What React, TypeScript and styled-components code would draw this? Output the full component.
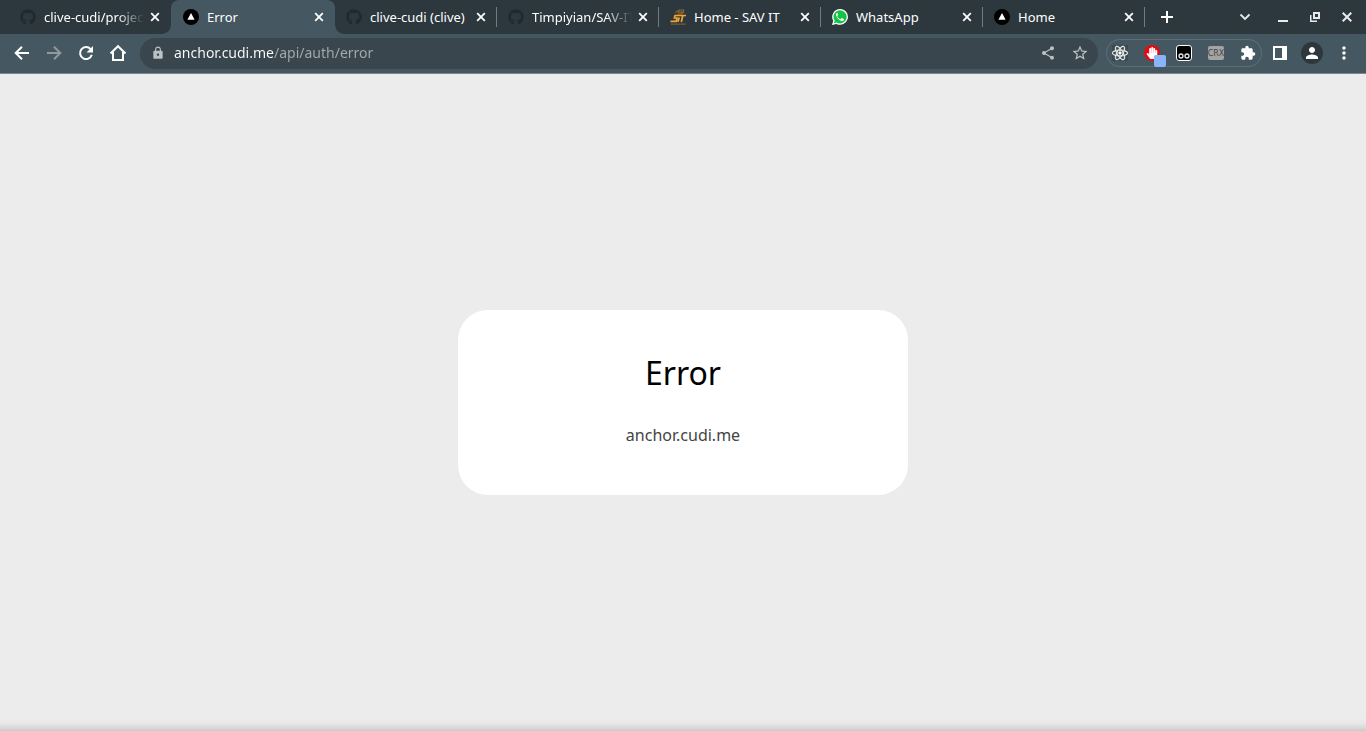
import React from "react";
import styled, { createGlobalStyle, css } from "styled-components";
import {
  MdLock,
  MdShare,
  MdStarBorder,
  MdExtension,
  MdPerson,
  MdMoreVert,
} from "react-icons/md";
import { FaGithub, FaReact, FaHandPaper } from "react-icons/fa";

const frame = "#2d383e";
const toolbar = "#455760";
const field = "#3a464d";

const GlobalStyle = createGlobalStyle`
  *, *::before, *::after { box-sizing: border-box; }
  body { margin: 0; font-family: "Noto Sans", sans-serif; background: #ececec; }
  button { padding: 0; border: 0; background: none; font: inherit; color: inherit; }
  svg { display: block; flex: none; }
`;

const Window = styled.div`
  display: flex;
  flex-direction: column;
  min-height: 100vh;
`;

const TabStrip = styled.header`
  display: flex;
  align-items: center;
  height: 34px;
  padding: 0 3px 0 9px;
  background: ${frame};
  color: #fff;
`;

const TabList = styled.nav`
  display: flex;
  flex: 0 1 auto;
  min-width: 0;
  height: 100%;
`;

const Tab = styled.div<{ $active?: boolean; $divided?: boolean }>`
  position: relative;
  display: flex;
  align-items: center;
  flex: 0 1 auto;
  width: ${(p) => (p.$active ? 164 : 162)}px;
  min-width: 0;
  height: 34px;
  padding: 0 8px 0 ${(p) => (p.$active ? 12 : 11)}px;

  ${(p) =>
    p.$divided &&
    css`
      &::after {
        content: "";
        position: absolute;
        right: 0;
        top: 7px;
        width: 1px;
        height: 20px;
        background: #707a7f;
      }
    `}

  ${(p) =>
    p.$active &&
    css`
      background: ${toolbar};
      border-radius: 8px 8px 0 0;

      &::before,
      &::after {
        content: "";
        position: absolute;
        bottom: 0;
        width: 8px;
        height: 8px;
      }
      &::before {
        right: 100%;
        background: radial-gradient(circle at 0 0, transparent 7px, ${toolbar} 8px);
      }
      &::after {
        left: 100%;
        background: radial-gradient(circle at 100% 0, transparent 7px, ${toolbar} 8px);
      }
    `}
`;

const TabLink = styled.a`
  display: flex;
  align-items: center;
  flex: 1;
  min-width: 0;
  gap: 8px;
  color: #fff;
  font-size: 13px;
  line-height: 18px;
  text-decoration: none;
`;

const TabTitle = styled.span<{ $fade?: boolean }>`
  flex: 1;
  min-width: 0;
  overflow: hidden;
  white-space: nowrap;
  ${(p) =>
    p.$fade &&
    css`
      mask-image: linear-gradient(to left, transparent 3px, #000 30px);
    `}
`;

const TabClose = styled.button`
  display: grid;
  place-items: center;
  flex: none;
  width: 16px;
  height: 16px;
`;

const FrameButton = styled.button`
  display: grid;
  place-items: center;
  flex: none;
  width: 32px;
  height: 32px;
  color: #e8eaeb;
`;

const NewTab = styled(FrameButton)`
  margin-left: 6px;
  color: #fff;
`;

const FrameControls = styled.div`
  display: flex;
  margin-left: auto;
  & > :first-child {
    margin-right: 6px;
  }
`;

const Toolbar = styled.div`
  display: flex;
  align-items: center;
  height: 40px;
  padding: 0 6px 1px;
  background: ${toolbar};
  border-bottom: 1px solid #7b878d;
  color: #fff;
`;

const ToolButton = styled.button<{ $dim?: boolean }>`
  display: grid;
  place-items: center;
  position: relative;
  flex: none;
  width: 32px;
  height: 28px;
  color: ${(p) => (p.$dim ? "#8f9a9f" : "#fff")};
`;

const AddressBar = styled.form`
  display: flex;
  align-items: center;
  flex: 1;
  min-width: 0;
  height: 31px;
  margin: 0 8px 0 6px;
  padding: 0 2px 0 11px;
  border-radius: 16px;
  background: ${field};
  color: #bcc1c4;
`;

const AddressInput = styled.input`
  flex: 1;
  min-width: 0;
  margin-left: 9px;
  padding: 0;
  border: 0;
  outline: 0;
  font: 14px/20px "Noto Sans", sans-serif;
  color: #fff;
  background: linear-gradient(to right, #fff 100px, #a4abae 100px);
  background-clip: text;
  -webkit-text-fill-color: transparent;
`;

const FieldButton = styled(ToolButton)`
  color: #bcc1c4;
`;

const Extensions = styled.div`
  display: flex;
  align-items: center;
  gap: 4px;
  height: 28px;
  margin-right: 2px;
  border-radius: 14px;
  box-shadow: inset 0 0 0 1px #5c6d76;
`;

const ExtensionButton = styled(ToolButton)`
  width: 28px;
`;

const ReactTile = styled.span`
  display: grid;
  place-items: center;
  width: 16px;
  height: 16px;
  background: #3c4b53;
`;

const Blocker = styled.span`
  display: grid;
  place-items: center;
  width: 16px;
  height: 16px;
  border-radius: 50%;
  background: #e50b12;
`;

const Badge = styled.span`
  position: absolute;
  right: 0;
  bottom: 0;
  width: 12px;
  height: 12px;
  border-radius: 2px;
  background: #8ab4f8;
`;

const Crx = styled.span`
  display: flex;
  justify-content: center;
  width: 16px;
  height: 14px;
  border-radius: 2px;
  background: #a3a3a3;
  color: #454545;
  font: 8px/16px "DejaVu Sans", sans-serif;
`;

const Avatar = styled.span`
  display: grid;
  place-items: center;
  width: 22px;
  height: 22px;
  border-radius: 50%;
  background: ${frame};
`;

const Page = styled.main`
  display: grid;
  place-items: center;
  flex: 1;
  padding: 20px;
  background: linear-gradient(to top, #cacaca, #dcdcdc 4px, #e8e8e8 8px, #ececec 13px);
`;

const Card = styled.section`
  display: flex;
  flex-direction: column;
  gap: 29px;
  width: 100%;
  max-width: 450px;
  padding: 41px 50px 49px;
  border-radius: 30px;
  background: #fff;
  text-align: center;
`;

const Heading = styled.h1`
  margin: 0;
  color: #000;
  font-size: 32px;
  font-weight: 400;
  line-height: 44px;
`;

const SiteLink = styled.a`
  color: #444;
  font-size: 16px;
  line-height: 22px;
  text-decoration: none;
`;

const CloseIcon = ({ size = 16 }: { size?: number }) => (
  <svg width={size} height={size} viewBox="0 0 16 16" aria-hidden="true">
    <path d="M4.2 4.2l7.6 7.6M11.8 4.2l-7.6 7.6" stroke="currentColor" strokeWidth="1.8" />
  </svg>
);

const VercelMark = () => (
  <svg width="16" height="16" viewBox="0 0 16 16" aria-hidden="true">
    <circle cx="8" cy="8" r="8" fill="#000" />
    <path d="M8 4l3.6 6.7H4.4z" fill="#fff" />
  </svg>
);

const WhatsAppMark = () => (
  <svg width="16" height="16" viewBox="0 0 16 16" aria-hidden="true">
    <path d="M8.1 0a7.9 7.9 0 1 1-3.7 14.9L0 16l1.2-4.2A7.9 7.9 0 0 1 8.1 0z" fill="#fff" />
    <path d="M8.1 1.3a6.6 6.6 0 1 1-3.5 12.2l-2.7.7.8-2.6A6.6 6.6 0 0 1 8.1 1.3z" fill="#12c344" />
    <path
      d="M5.9 4.3c-.2-.4-.5-.4-.8-.4-1 .6-1.3 1.5-1 2.5.8 2.5 2.6 4.6 5.2 5.5 1.3.4 2.6-.2 2.7-1.5 0-.3 0-.4-.3-.5l-1.7-.8c-.3-.1-.5 0-.6.2l-.6.8c-.2.2-.4.2-.7.1-1.3-.6-2.2-1.5-2.9-2.7-.1-.3 0-.4.2-.6.4-.5.6-.7.4-1.1z"
      fill="#fff"
    />
  </svg>
);

const SavMark = () => (
  <svg width="16" height="16" viewBox="0 0 16 16" aria-hidden="true" fill="none">
    <path d="M5.5 3.500L9.500 1h4v2.500L11 5H7.500M8 3.200h5" stroke="#8a6a35" strokeWidth="1.200" />
    <path
      d="M8 6.500H5L4.400 9H7L6.300 12.300H.5M9.200 8.500L8 12.800M8 6.500h8M12.800 6.500L11.300 13"
      stroke="#f2a52e"
      strokeWidth="1.700"
    />
    <path d="M1 15.200h14.500" stroke="#80663a" strokeWidth="1.200" strokeDasharray="2 .5" />
  </svg>
);

const ArrowIcon = ({ forward = false }: { forward?: boolean }) => (
  <svg width="16" height="16" viewBox="0 0 16 16" aria-hidden="true">
    <path
      d={forward ? "M1 8h13M8 1.700L14.300 8 8 14.300" : "M15 8H2M8 1.700L1.700 8 8 14.300"}
      fill="none"
      stroke="currentColor"
      strokeWidth="2"
    />
  </svg>
);

const ReloadIcon = () => (
  <svg width="16" height="16" viewBox="0 0 16 16" aria-hidden="true">
    <path
      d="M13.800 9.800A6 6 0 1 1 12.600 4.100"
      fill="none"
      stroke="currentColor"
      strokeWidth="2"
    />
    <path d="M15 1v6.500H8.500z" fill="currentColor" />
  </svg>
);

const HomeIcon = () => (
  <svg width="18" height="18" viewBox="0 0 18 18" aria-hidden="true">
    <path
      d="M1.500 9.500L9 2.200l7.500 7.300M4 8v8h10V8"
      fill="none"
      stroke="currentColor"
      strokeWidth="2"
    />
  </svg>
);

const RobotIcon = () => (
  <svg width="16" height="16" viewBox="0 0 16 16" aria-hidden="true">
    <rect x=".5" y=".5" width="15" height="15" rx="2.500" fill="#000" stroke="#fff" />
    <g fill="#000" stroke="#dfe6e9" strokeWidth="1.300">
      <circle cx="5" cy="11" r="2" />
      <circle cx="11" cy="11" r="2" />
    </g>
  </svg>
);

const SidePanelIcon = () => (
  <svg width="14" height="14" viewBox="0 0 14 14" aria-hidden="true">
    <path d="M0 0h14v14H0zM2 2v10h7V2z" fill="currentColor" fillRule="evenodd" />
  </svg>
);

const GithubMark = () => <FaGithub size={16} color="#22292e" />;

const tabs = [
  { title: "clive-cudi/project", icon: <GithubMark />, fade: true },
  { title: "Error", icon: <VercelMark />, active: true },
  { title: "clive-cudi (clive)", icon: <GithubMark />, divided: true },
  { title: "Timpiyian/SAV-IT", icon: <GithubMark />, fade: true, divided: true },
  { title: "Home - SAV IT", icon: <SavMark />, divided: true },
  { title: "WhatsApp", icon: <WhatsAppMark />, divided: true },
  { title: "Home", icon: <VercelMark />, divided: true },
];

export default function App() {
  return (
    <Window>
      <GlobalStyle />
      <TabStrip>
        <TabList aria-label="Tabs">
          {tabs.map((tab, i) => (
            <Tab key={i} $active={tab.active} $divided={tab.divided}>
              <TabLink href="#" aria-current={tab.active ? "page" : undefined}>
                {tab.icon}
                <TabTitle $fade={tab.fade}>{tab.title}</TabTitle>
              </TabLink>
              <TabClose aria-label={`Close ${tab.title}`}>
                <CloseIcon />
              </TabClose>
            </Tab>
          ))}
        </TabList>
        <NewTab aria-label="New tab">
          <svg width="12" height="12" viewBox="0 0 12 12">
            <path d="M6 0v12M0 6h12" stroke="currentColor" strokeWidth="2" />
          </svg>
        </NewTab>
        <FrameControls>
          <FrameButton aria-label="Search tabs">
            <svg width="12" height="12" viewBox="0 0 12 12">
              <path d="M1.500 3.500L6 8l4.500-4.500" fill="none" stroke="currentColor" strokeWidth="1.800" />
            </svg>
          </FrameButton>
          <FrameButton aria-label="Minimize">
            <svg width="10" height="10" viewBox="0 0 10 10">
              <path d="M0 9h10" stroke="currentColor" strokeWidth="2" />
            </svg>
          </FrameButton>
          <FrameButton aria-label="Restore">
            <svg width="10" height="10" viewBox="0 0 10 10" fill="none" stroke="currentColor">
              <path d="M4 1h5v5H4z" strokeWidth="2" />
              <path d="M.75 3v6.250H7" strokeWidth="1.500" />
            </svg>
          </FrameButton>
          <FrameButton aria-label="Close window">
            <CloseIcon size={18} />
          </FrameButton>
        </FrameControls>
      </TabStrip>

      <Toolbar>
        <ToolButton aria-label="Back">
          <ArrowIcon />
        </ToolButton>
        <ToolButton aria-label="Forward" $dim>
          <ArrowIcon forward />
        </ToolButton>
        <ToolButton aria-label="Reload">
          <ReloadIcon />
        </ToolButton>
        <ToolButton aria-label="Home">
          <HomeIcon />
        </ToolButton>
        <AddressBar onSubmit={(e) => e.preventDefault()}>
          <MdLock size={14} />
          <AddressInput aria-label="Address" defaultValue="anchor.cudi.me/api/auth/error" />
          <FieldButton type="button" aria-label="Share">
            <MdShare size={16} />
          </FieldButton>
          <FieldButton type="button" aria-label="Bookmark">
            <MdStarBorder size={18} />
          </FieldButton>
        </AddressBar>
        <Extensions>
          <ExtensionButton aria-label="React tools">
            <ReactTile>
              <FaReact size={16} stroke="#fff" strokeWidth={12} />
            </ReactTile>
          </ExtensionButton>
          <ExtensionButton aria-label="Ad blocker">
            <Blocker>
              <FaHandPaper size={12} />
            </Blocker>
            <Badge />
          </ExtensionButton>
          <ExtensionButton aria-label="Scripts">
            <RobotIcon />
          </ExtensionButton>
          <ExtensionButton aria-label="CRX">
            <Crx>CRX</Crx>
          </ExtensionButton>
          <ExtensionButton aria-label="Extensions">
            <MdExtension size={16} />
          </ExtensionButton>
        </Extensions>
        <ToolButton aria-label="Side panel">
          <SidePanelIcon />
        </ToolButton>
        <ToolButton aria-label="Profile">
          <Avatar>
            <MdPerson size={18} />
          </Avatar>
        </ToolButton>
        <ToolButton aria-label="Menu">
          <MdMoreVert size={20} />
        </ToolButton>
      </Toolbar>

      <Page>
        <Card>
          <Heading>Error</Heading>
          <SiteLink href="#">anchor.cudi.me</SiteLink>
        </Card>
      </Page>
    </Window>
  );
}
